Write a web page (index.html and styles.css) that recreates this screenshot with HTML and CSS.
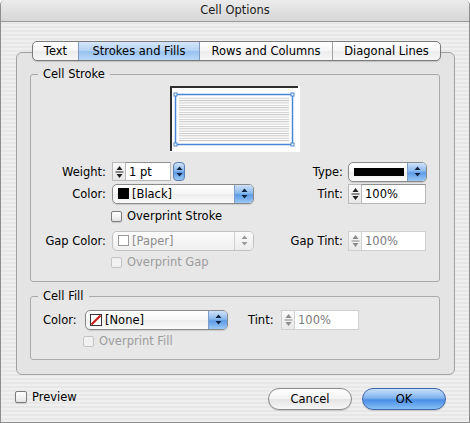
FILE: index.html
```html
<!DOCTYPE html>
<html>
<head>
<meta charset="utf-8">
<title>Cell Options</title>
<link rel="stylesheet" href="styles.css">
</head>
<body>
<div class="window">
  <div class="titlebar">Cell Options</div>
  <div class="content">
    <div class="tabs">
      <div class="tab t-text">Text</div>
      <div class="tab t-strokes selected">Strokes and Fills</div>
      <div class="tab t-rows">Rows and Columns</div>
      <div class="tab t-diag">Diagonal Lines</div>
    </div>
    <div class="panel">
      <fieldset class="group stroke">
        <legend>Cell Stroke</legend>
        <div class="preview">
          <svg width="130" height="66" viewBox="0 0 130 66">
            <defs>
              <pattern id="lines" width="4" height="2.35" patternUnits="userSpaceOnUse">
                <rect width="4" height="1" fill="#c8c8c8"/>
              </pattern>
            </defs>
            <rect x="0" y="0" width="130" height="66" fill="#fff"/>
            <rect x="9" y="11" width="110" height="45" fill="url(#lines)"/>
            <path d="M1 65V1H128" fill="none" stroke="#2e2e2e" stroke-width="2"/>
            <rect x="5.5" y="8.5" width="117" height="50" fill="none" stroke="#4a85d6" stroke-width="1.5"/>
            <g fill="#fff" stroke="#4a85d6" stroke-width="1">
              <rect x="4" y="7" width="3" height="3"/>
              <rect x="121" y="7" width="3" height="3"/>
              <rect x="4" y="57" width="3" height="3"/>
              <rect x="121" y="57" width="3" height="3"/>
            </g>
          </svg>
        </div>
        <div class="stroke-grid">
          <span class="lbl">Weight:</span>
          <div class="combo">
            <span class="spin"><svg width="11" height="16" viewBox="0 0 11 16"><path d="M5.5 2L8.5 6H2.5Z M2.5 10H8.5L5.5 14Z"/><path d="M1.5 8H9.5" stroke="currentColor" stroke-width="1"/></svg></span>
            <span class="field w-weight">1 pt</span>
            <span class="minibtn"><svg width="7" height="11" viewBox="0 0 7 11"><path d="M3.5 0.5L6.5 4H0.5Z M0.5 7H6.5L3.5 10.5Z"/></svg></span>
          </div>
          <span class="lbl lbl-r">Type:</span>
          <div class="popup w-type">
            <span class="linebar"></span>
            <span class="parrow"><svg width="7" height="11" viewBox="0 0 7 11"><path d="M3.5 0.5L6.5 4H0.5Z M0.5 7H6.5L3.5 10.5Z"/></svg></span>
          </div>

          <span class="lbl">Color:</span>
          <div class="popup w-color">
            <span class="swatch black"></span>
            <span class="ptext">[Black]</span>
            <span class="parrow"><svg width="7" height="11" viewBox="0 0 7 11"><path d="M3.5 0.5L6.5 4H0.5Z M0.5 7H6.5L3.5 10.5Z"/></svg></span>
          </div>
          <span class="lbl lbl-r">Tint:</span>
          <div class="combo">
            <span class="spin"><svg width="11" height="16" viewBox="0 0 11 16"><path d="M5.5 2L8.5 6H2.5Z M2.5 10H8.5L5.5 14Z"/><path d="M1.5 8H9.5" stroke="currentColor" stroke-width="1"/></svg></span>
            <span class="field w-tint">100%</span>
          </div>

          <label class="check check-row"><span class="cb"></span>Overprint Stroke</label>

          <span class="lbl">Gap Color:</span>
          <div class="popup w-color disabled">
            <span class="swatch paper"></span>
            <span class="ptext">[Paper]</span>
            <span class="parrow"><svg width="7" height="11" viewBox="0 0 7 11"><path d="M3.5 0.5L6.5 4H0.5Z M0.5 7H6.5L3.5 10.5Z"/></svg></span>
          </div>
          <span class="lbl lbl-r">Gap Tint:</span>
          <div class="combo disabled">
            <span class="spin"><svg width="11" height="16" viewBox="0 0 11 16"><path d="M5.5 2L8.5 6H2.5Z M2.5 10H8.5L5.5 14Z"/><path d="M1.5 8H9.5" stroke="currentColor" stroke-width="1"/></svg></span>
            <span class="field w-tint">100%</span>
          </div>

          <label class="check check-row disabled"><span class="cb"></span>Overprint Gap</label>
        </div>
      </fieldset>

      <fieldset class="group fill">
        <legend>Cell Fill</legend>
        <div class="fill-row">
          <span class="fill-lbl">Color:</span>
          <div class="popup w-fill">
            <span class="swatch none"><svg width="12" height="12" viewBox="0 0 12 12"><rect x="0.5" y="0.5" width="11" height="11" fill="#fff" stroke="#333"/><path d="M1.5 10.5L10.5 1.5" stroke="#d01818" stroke-width="2.2"/></svg></span>
            <span class="ptext">[None]</span>
            <span class="parrow"><svg width="7" height="11" viewBox="0 0 7 11"><path d="M3.5 0.5L6.5 4H0.5Z M0.5 7H6.5L3.5 10.5Z"/></svg></span>
          </div>
          <span class="fill-tint-lbl">Tint:</span>
          <div class="combo dim">
            <span class="spin"><svg width="11" height="16" viewBox="0 0 11 16"><path d="M5.5 2L8.5 6H2.5Z M2.5 10H8.5L5.5 14Z"/><path d="M1.5 8H9.5" stroke="currentColor" stroke-width="1"/></svg></span>
            <span class="field w-tint">100%</span>
          </div>
        </div>
        <label class="check fill-check disabled"><span class="cb"></span>Overprint Fill</label>
      </fieldset>
    </div>

    <div class="footer">
      <label class="check preview-check"><span class="cb"></span>Preview</label>
      <div class="buttons">
        <button class="btn cancel">Cancel</button>
        <button class="btn ok">OK</button>
      </div>
    </div>
  </div>
</div>
</body>
</html>
```

FILE: styles.css
```css
* { box-sizing: border-box; }
html, body { margin: 0; padding: 0; }
body {
  width: 470px;
  height: 423px;
  overflow: hidden;
  font-family: "DejaVu Sans", "Liberation Sans", sans-serif;
  font-size: 11.5px;
  color: #000;
  background: #fff;
}

.window {
  width: 470px;
  height: 423px;
  display: flex;
  flex-direction: column;
  border: 1px solid #8e8e8e;
  border-top: none;
  border-radius: 5px 5px 0 0;
  overflow: hidden;
  background: repeating-linear-gradient(to bottom, #efefef 0, #efefef 2px, #e7e7e7 2px, #e7e7e7 4px);
}

.titlebar {
  height: 22px;
  flex: none;
  display: flex;
  align-items: center;
  justify-content: center;
  padding-bottom: 1px;
  border-bottom: 1px solid #9c9c9c;
  background: linear-gradient(to bottom, #ececec, #d6d6d6);
  color: #1a1a1a;
}

.content {
  flex: 1;
  padding-top: 19px;
  display: flex;
  flex-direction: column;
}

/* Tabs */
.tabs {
  position: relative;
  z-index: 1;
  display: flex;
  align-self: flex-start;
  height: 20px;
  margin-left: 31px;
  border: 1px solid #7b7b7b;
  border-radius: 5px;
  overflow: hidden;
  box-shadow: 0 1px 1px rgba(0,0,0,0.15);
  background: linear-gradient(to bottom, #ffffff 0%, #f6f6f6 50%, #ececec 51%, #f7f7f7 100%);
}
.tab {
  display: flex;
  align-items: center;
  justify-content: center;
  padding-bottom: 1px;
  border-left: 1px solid #a3a3a3;
  white-space: nowrap;
}
.t-text { width: 45px; border-left: none; }
.t-strokes { width: 121px; }
.t-rows { width: 133px; }
.t-diag { width: 108px; }
.tab.selected {
  background: linear-gradient(to bottom, #d6e7fb 0%, #b3d2f4 48%, #98c2f0 52%, #b9d8f7 100%);
  border-left-color: #7f98bb;
}
.tab.selected + .tab { border-left-color: #7f98bb; }

/* Panel */
.panel {
  margin: -9px 0 0 15px;
  width: 439px;
  height: 323px;
  flex: none;
  border: 1px solid #a2a2a2;
  border-radius: 6px;
  background: #e4e4e4;
  padding: 15px 14px 0 13px;
}

.group {
  margin: 0;
  padding: 0;
  min-inline-size: 0;
  border: 1px solid #aaaaaa;
  border-radius: 3px;
  background: #e7e7e7;
}
.group legend {
  margin-left: 7px;
  padding: 0 5px;
  line-height: 13px;
}
.stroke { padding-bottom: 11px; }
.fill { margin-top: 8px; padding-bottom: 11px; }

.preview {
  width: 130px;
  height: 66px;
  margin: 5px auto 0;
}
.preview svg { display: block; }

.stroke-grid {
  margin-top: 9px;
  display: grid;
  grid-template-columns: 81px 142px 94px 1fr;
  grid-template-rows: 21px 23px 22px 27px 16px;
  align-items: center;
}
.lbl {
  text-align: right;
  padding-right: 6px;
  white-space: nowrap;
}
.lbl-r { padding-right: 5px; }
.check-row { grid-column: 2 / -1; margin-left: -1px; }

/* Generic controls */
.combo {
  display: flex;
  align-items: center;
}
.spin {
  width: 13px;
  height: 20px;
  flex: none;
  display: flex;
  align-items: center;
  justify-content: center;
  border: 1px solid #b9b9b9;
  border-right: none;
  background: linear-gradient(to bottom, #fafafa, #e8e8e8);
  color: #222;
}
.spin svg { fill: currentColor; display: block; }
.field {
  height: 20px;
  display: flex;
  align-items: center;
  padding-left: 3px;
  background: #fff;
  border: 1px solid #b8b8b8;
  border-top-color: #8f8f8f;
  white-space: nowrap;
}
.w-weight { width: 46px; height: 19px; }
.w-tint { width: 65px; }
.combo .w-weight + .minibtn { margin-left: 2px; }
.combo:first-of-type .spin { height: 19px; }

.minibtn {
  width: 12px;
  height: 19px;
  flex: none;
  display: flex;
  align-items: center;
  justify-content: center;
  border: 1px solid #5d7fb3;
  border-radius: 4px;
  background: linear-gradient(to bottom, #cfe2f9 0%, #8ab9ee 45%, #5e9be6 55%, #9cc8f5 100%);
  color: #122540;
}
.minibtn svg { fill: currentColor; display: block; }

.popup {
  height: 20px;
  display: flex;
  align-items: center;
  border: 1px solid #8a8a8a;
  border-radius: 5px;
  overflow: hidden;
  background: linear-gradient(to bottom, #ffffff 0%, #f6f6f6 50%, #ededed 51%, #fbfbfb 100%);
  box-shadow: 0 1px 1px rgba(0,0,0,0.12);
}
.w-color { width: 142px; padding-left: 5px; }
.w-type { width: 79px; height: 20px; padding-left: 5px; }
.w-fill { width: 143px; padding-left: 4px; }
.ptext { flex: 1; padding-left: 3px; white-space: nowrap; }
.parrow {
  width: 19px;
  align-self: stretch;
  flex: none;
  display: flex;
  align-items: center;
  justify-content: center;
  border-left: 1px solid #7b9ccd;
  background: linear-gradient(to bottom, #cfe2f9 0%, #8ab9ee 45%, #5e9be6 55%, #9cc8f5 100%);
  color: #122540;
}
.parrow svg { fill: currentColor; display: block; }
.linebar {
  width: 50px;
  height: 8px;
  background: #000;
  flex: none;
  margin-right: auto;
}

.swatch {
  width: 11px;
  height: 11px;
  flex: none;
  display: block;
}
.swatch.black { background: #000; }
.swatch.paper { background: #fff; border: 1px solid #9a9a9a; }
.swatch.none { width: 12px; height: 12px; }
.swatch.none svg { display: block; }

.popup.disabled {
  border-color: #c2c2c2;
  box-shadow: none;
  background: linear-gradient(to bottom, #fbfbfb, #efefef);
  color: #8d8d8d;
}
.popup.disabled .parrow {
  background: linear-gradient(to bottom, #fbfbfb, #ececec);
  border-left-color: #d0d0d0;
  color: #9a9a9a;
}
.combo.disabled .field, .combo.dim .field { color: #7a7a7a; border-color: #d0d0d0; }
.combo.disabled .spin, .combo.dim .spin { color: #8a8a8a; border-color: #d0d0d0; }

/* Checkboxes */
.check {
  display: flex;
  align-items: center;
  white-space: nowrap;
}
.cb {
  width: 11px;
  height: 11px;
  flex: none;
  margin-right: 5px;
  border: 1px solid #7c7c7c;
  border-radius: 2px;
  background: linear-gradient(to bottom, #ffffff, #e6e6e6);
  box-shadow: 0 1px 1px rgba(0,0,0,0.12);
}
.check.disabled { color: #9c9c9c; }
.check.disabled .cb { border-color: #c4c4c4; box-shadow: none; background: #f1f1f1; }

/* Cell fill */
.fill-row {
  margin-top: 6px;
  height: 21px;
  display: flex;
  align-items: center;
  padding-left: 12px;
}
.fill-lbl { width: 42px; }
.fill-tint-lbl { margin-left: 20px; width: 33px; }
.fill-check { margin: 4px 0 0 52px; height: 14px; }

/* Footer */
.footer {
  margin-top: 13px;
  height: 22px;
  display: flex;
  align-items: center;
  justify-content: space-between;
  padding: 0 23px 0 14px;
}
.preview-check { margin-top: -5px; }
.preview-check .cb { width: 12px; height: 12px; }
.buttons { display: flex; gap: 10px; }
.btn {
  width: 84px;
  height: 22px;
  font: inherit;
  color: #000;
  border-radius: 11px;
  padding: 0 0 1px;
  border: 1px solid #8b8b8b;
  background: linear-gradient(to bottom, #ffffff 0%, #f4f4f4 48%, #e4e4e4 52%, #f7f7f7 100%);
  box-shadow: 0 1px 1px rgba(0,0,0,0.15);
}
.btn.ok {
  border-color: #3f67a8;
  background: linear-gradient(to bottom, #c9e0fb 0%, #7fb2ee 45%, #4a8ee6 55%, #87c0f7 100%);
}
```
